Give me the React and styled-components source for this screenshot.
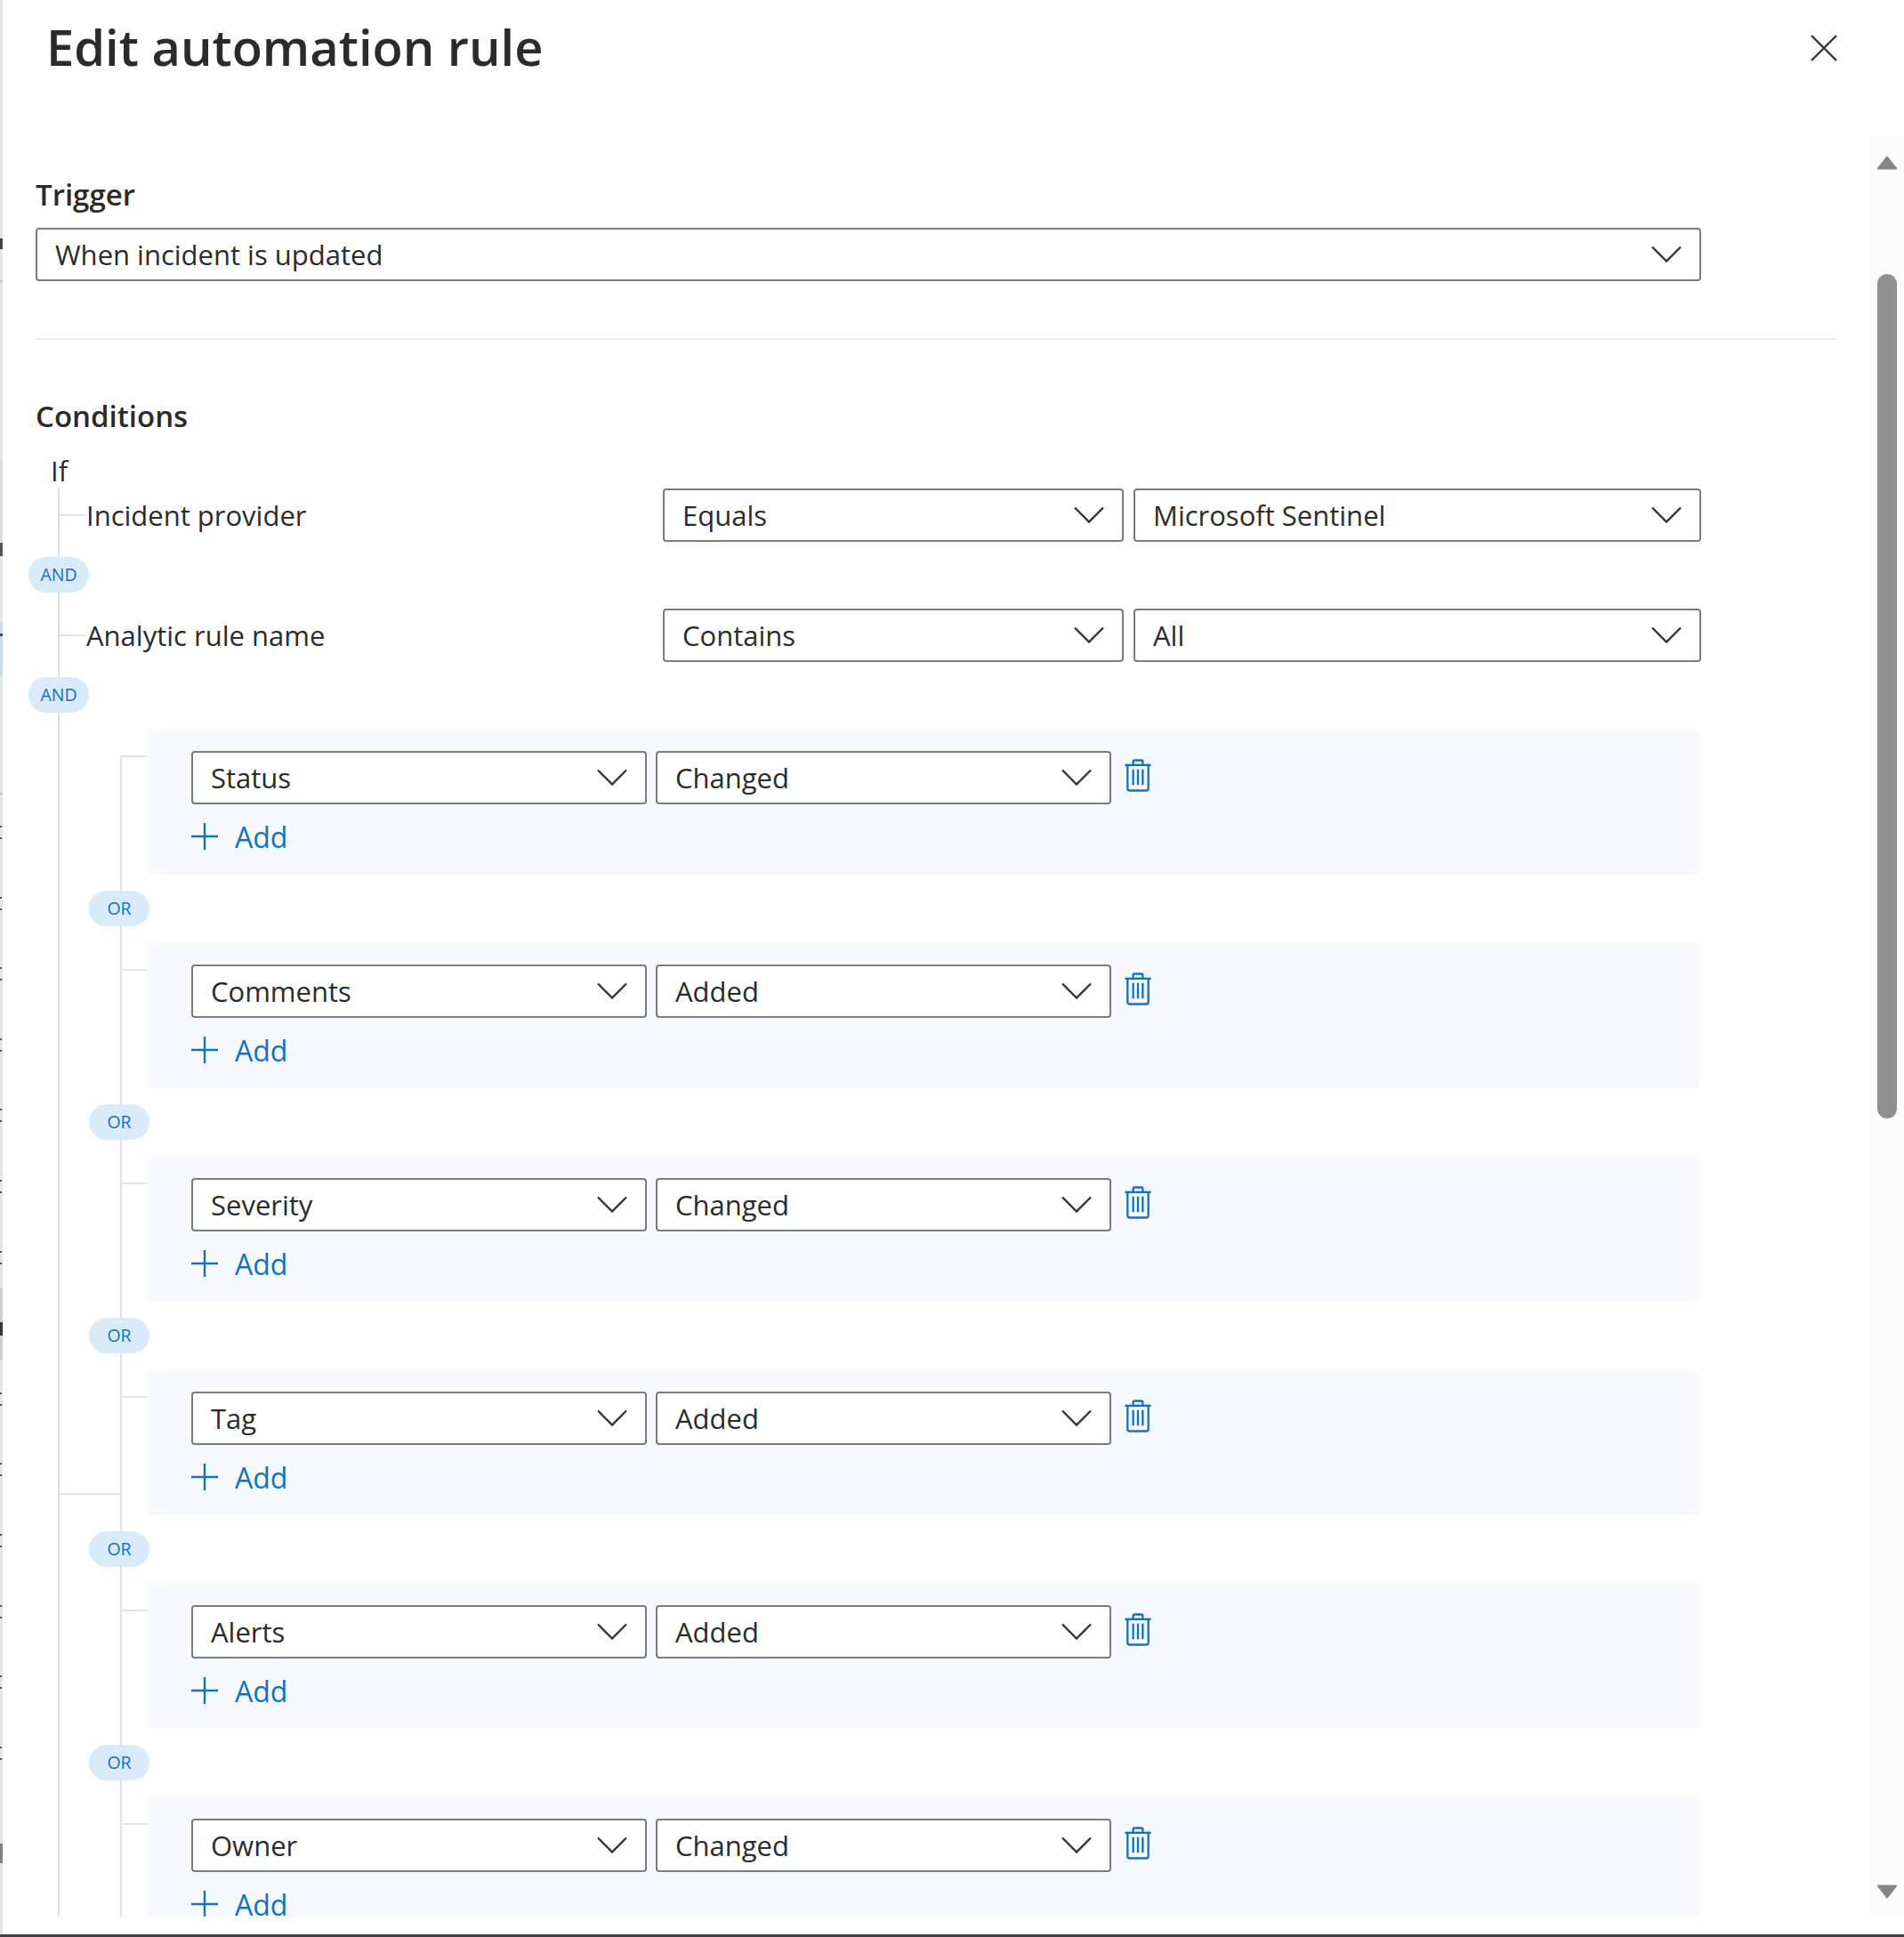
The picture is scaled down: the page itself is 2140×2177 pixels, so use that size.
import React from 'react';
import styled, { createGlobalStyle } from 'styled-components';

const GlobalStyle = createGlobalStyle`
  html, body {
    margin: 0;
    padding: 0;
    background: #fff;
  }
  body {
    font-family: "Open Sans", "Noto Sans", "Liberation Sans", sans-serif;
    color: #2b2b2b;
  }
`;

const Panel = styled.div`
  width: 2140px;
  height: 2177px;
  display: flex;
  flex-direction: column;
  overflow: hidden;
`;

const Body = styled.div`
  flex: 1;
  display: flex;
  align-items: flex-start;
  min-height: 0;
`;

/* sliver of the page behind the blade */
const LeftEdge = styled.div`
  position: relative;
  width: 3px;
  height: 100%;
  flex: none;
  background: #e4e4e4;
`;

const EdgeMark = styled.span`
  position: absolute;
  left: 0;
  width: ${({ $w }) => $w || 3}px;
  top: ${({ $top }) => $top}px;
  height: ${({ $h }) => $h}px;
  background: ${({ $c }) => $c};
`;

const Main = styled.div`
  flex: 1;
  min-width: 0;
  height: 2154px;
  display: flex;
  overflow: hidden;
`;

const Content = styled.div`
  flex: 1;
  min-width: 0;
  padding-left: 37px;
  padding-right: 37px;
  overflow: hidden;
`;

const Header = styled.header`
  height: 153px;
  display: flex;
  justify-content: space-between;
  padding-top: 21px;
  box-sizing: border-box;
`;

const Title = styled.h1`
  margin: 0 0 0 12px;
  font-size: 56px;
  line-height: 62px;
  font-weight: 600;
  letter-spacing: 0;
`;

const CloseButton = styled.button`
  width: 30px;
  height: 30px;
  margin-top: 18px;
  padding: 0;
  border: 0;
  background: none;
  color: #333;
`;

const SectionLabel = styled.div`
  height: 38px;
  font-size: 33px;
  line-height: 38px;
  font-weight: 600;
`;

const Select = styled.div`
  width: ${({ $w }) => $w}px;
  height: 60px;
  flex: none;
  box-sizing: border-box;
  display: flex;
  align-items: center;
  justify-content: space-between;
  padding: 0 20px 0 20px;
  background: #fff;
  border: 2px solid #7b7b7b;
  border-radius: 4px;
  font-size: 31px;
  color: #2b2b2b;
`;

const Chevron = styled.svg`
  width: 34px;
  height: 20px;
  flex: none;
  color: #333;
`;

const TriggerSection = styled.section`
  padding-top: 47px;
`;

const TriggerBox = styled.div`
  margin-top: 18px;
`;

const Divider = styled.hr`
  margin: 64px 0 0;
  border: 0;
  height: 2px;
  background: #e9e9e9;
`;

const ConditionsSection = styled.section`
  padding-top: 67px;
`;

const IfLabel = styled.div`
  margin: 23px 0 0 17px;
  height: 38px;
  font-size: 31px;
  line-height: 38px;
`;

const Tree = styled.div`
  position: relative;
  margin-top: 1px;

  /* main vertical connector */
  &::before {
    content: '';
    position: absolute;
    left: 25px;
    top: 0;
    bottom: 0;
    width: 2px;
    background: #d9e0e5;
  }
`;

const ConditionRow = styled.div`
  position: relative;
  display: flex;
  align-items: center;
  gap: 11px;
  height: 60px;
  padding-left: 57px;

  &::before {
    content: '';
    position: absolute;
    left: 26px;
    top: 29px;
    width: 31px;
    height: 2px;
    background: #dde3e8;
  }
`;

const ConditionName = styled.div`
  width: 637px;
  flex: none;
  font-size: 31px;
`;

const Pill = styled.div`
  position: relative;
  z-index: 1;
  box-sizing: border-box;
  width: 68px;
  height: 40px;
  margin-left: ${({ $left }) => $left}px;
  border-radius: 20px;
  background: #d9ebfb;
  color: #1370c2;
  font-size: 19.5px;
  line-height: 40px;
  text-align: center;
`;

const AndSlot = styled.div`
  padding: 17px 0 18px;
`;

const Groups = styled.div`
  position: relative;
  margin-top: 0;
  padding-bottom: 60px;

  /* second level connector */
  &::before {
    content: '';
    position: absolute;
    left: 95px;
    top: 30px;
    bottom: 0;
    width: 2px;
    background: #d9e0e5;
  }

  /* joins the group to the main connector */
  &::after {
    content: '';
    position: absolute;
    left: 26px;
    top: 859px;
    width: 70px;
    height: 2px;
    background: #dde3e8;
  }
`;

const Card = styled.div`
  position: relative;
  width: 1745px;
  height: 164px;
  margin-left: 125px;
  box-sizing: border-box;
  padding: 25px 0 0 50px;
  background: #f6faff;
  border-radius: 6px;

  &::before {
    content: '';
    position: absolute;
    left: -29px;
    top: 30px;
    width: 29px;
    height: 2px;
    background: #dde3e8;
  }
`;

const CardRow = styled.div`
  display: flex;
  align-items: flex-start;
  gap: 10px;
`;

const TrashButton = styled.button`
  width: 32px;
  height: 37px;
  margin: 9px 0 0 4px;
  padding: 0;
  border: 0;
  background: none;
  color: #1370c2;
`;

const AddButton = styled.div`
  display: flex;
  align-items: center;
  gap: 19px;
  margin-top: 14px;
  height: 44px;
  color: #1370c2;
  font-size: 32px;
`;

const OrSlot = styled.div`
  height: 76px;
  display: flex;
  align-items: center;
`;

const Scrollbar = styled.div`
  width: 38px;
  flex: none;
  margin-top: 153px;
  background: #fcfcfc;
  display: flex;
  flex-direction: column;
  align-items: center;
`;

const Arrow = styled.svg`
  width: 24px;
  height: 17px;
  flex: none;
  margin-top: ${({ $mt }) => $mt || 0}px;
  margin-bottom: ${({ $mb }) => $mb || 0}px;
  fill: #858585;
`;

const Thumb = styled.div`
  width: 22px;
  height: 949px;
  flex: none;
  margin-top: 117px;
  margin-bottom: auto;
  border-radius: 11px;
  background: #8f8f8f;
`;

const BottomBar = styled.div`
  height: 3px;
  flex: none;
  background: #3c4043;
`;

const ChevronIcon = () => (
  <Chevron viewBox="0 0 34 20" fill="none" stroke="currentColor" strokeWidth="2.4">
    <path d="M1 1.5 L17 17.5 L33 1.5" />
  </Chevron>
);

const SelectBox = ({ w, children }) => (
  <Select $w={w}>
    <span>{children}</span>
    <ChevronIcon />
  </Select>
);

const TrashIcon = () => (
  <svg width="32" height="37" viewBox="0 0 32 38" fill="none" stroke="currentColor" strokeWidth="2.4">
    <path d="M1 7 H31" />
    <path d="M10.5 7 V3 Q10.5 1.5 12 1.5 H20 Q21.5 1.5 21.5 3 V7" />
    <path d="M4 7 V34 Q4 36.5 6.5 36.5 H25.5 Q28 36.5 28 34 V7" />
    <path d="M10.5 12 V30 M16 12 V30 M21.5 12 V30" />
  </svg>
);

const PlusIcon = () => (
  <svg width="30" height="30" viewBox="0 0 30 30" fill="none" stroke="currentColor" strokeWidth="2.4">
    <path d="M0 15 H30 M15 0 V30" />
  </svg>
);

const rules = [
  ['Status', 'Changed'],
  ['Comments', 'Added'],
  ['Severity', 'Changed'],
  ['Tag', 'Added'],
  ['Alerts', 'Added'],
  ['Owner', 'Changed'],
];

// rows of the list behind the blade: two dots every 79.6px
const edgeDots = Array.from({ length: 14 }, (_, i) => 928 + Math.round(i * 79.6)).filter((y) => y !== 1485);

function App() {
  return (
    <>
      <GlobalStyle />
      <Panel>
        <Body>
          <LeftEdge>
            <EdgeMark $top={268} $h={12} $w={3} $c="#444" />
            <EdgeMark $top={315} $h={2} $c="#c4c4c4" />
            <EdgeMark $top={517} $h={93} $c="#dcdcdc" />
            <EdgeMark $top={610} $h={15} $c="#555" />
            <EdgeMark $top={700} $h={60} $c="#cdd9e8" />
            <EdgeMark $top={712} $h={3} $c="#444" />
            <EdgeMark $top={891} $h={2} $c="#c4c4c4" />
            <EdgeMark $top={1448} $h={80} $c="#d0d0d0" />
            <EdgeMark $top={1486} $h={15} $c="#333" />
            <EdgeMark $top={2072} $h={22} $c="#808080" />
            {edgeDots.map((y) => (
              <React.Fragment key={y}>
                <EdgeMark $top={y} $h={2} $w={2} $c="#555" />
                <EdgeMark $top={y + 13} $h={2} $w={2} $c="#555" />
              </React.Fragment>
            ))}
          </LeftEdge>
          <Main>
            <Content>
              <Header>
                <Title>Edit automation rule</Title>
                <CloseButton aria-label="Close">
                  <svg width="30" height="30" viewBox="0 0 30 30" fill="none" stroke="currentColor" strokeWidth="2.4">
                    <path d="M1 1 L29 29 M29 1 L1 29" />
                  </svg>
                </CloseButton>
              </Header>

              <TriggerSection>
                <SectionLabel>Trigger</SectionLabel>
                <TriggerBox>
                  <SelectBox w={1872}>When incident is updated</SelectBox>
                </TriggerBox>
                <Divider />
              </TriggerSection>

              <ConditionsSection>
                <SectionLabel>Conditions</SectionLabel>
                <IfLabel>If</IfLabel>
                <Tree>
                  <ConditionRow>
                    <ConditionName>Incident provider</ConditionName>
                    <SelectBox w={518}>Equals</SelectBox>
                    <SelectBox w={638}>Microsoft Sentinel</SelectBox>
                  </ConditionRow>
                  <AndSlot>
                    <Pill $left={-8}>AND</Pill>
                  </AndSlot>
                  <ConditionRow>
                    <ConditionName>Analytic rule name</ConditionName>
                    <SelectBox w={518}>Contains</SelectBox>
                    <SelectBox w={638}>All</SelectBox>
                  </ConditionRow>
                  <AndSlot>
                    <Pill $left={-8}>AND</Pill>
                  </AndSlot>
                  <Groups>
                    {rules.map(([field, action], i) => (
                      <React.Fragment key={field}>
                        {i > 0 && (
                          <OrSlot>
                            <Pill $left={60}>OR</Pill>
                          </OrSlot>
                        )}
                        <Card>
                          <CardRow>
                            <SelectBox w={512}>{field}</SelectBox>
                            <SelectBox w={512}>{action}</SelectBox>
                            <TrashButton aria-label="Delete">
                              <TrashIcon />
                            </TrashButton>
                          </CardRow>
                          <AddButton>
                            <PlusIcon />
                            Add
                          </AddButton>
                        </Card>
                      </React.Fragment>
                    ))}
                  </Groups>
                </Tree>
              </ConditionsSection>
            </Content>
            <Scrollbar>
              <Arrow $mt={21} viewBox="0 0 24 17">
                <path d="M12 1 L23 15 Q23.5 16.5 22 16.5 H2 Q0.5 16.5 1 15 Z" />
              </Arrow>
              <Thumb />
              <Arrow $mb={19} viewBox="0 0 24 17">
                <path d="M12 16 L23 2 Q23.5 0.5 22 0.5 H2 Q0.5 0.5 1 2 Z" />
              </Arrow>
            </Scrollbar>
          </Main>
        </Body>
        <BottomBar />
      </Panel>
    </>
  );
}

export default App;
